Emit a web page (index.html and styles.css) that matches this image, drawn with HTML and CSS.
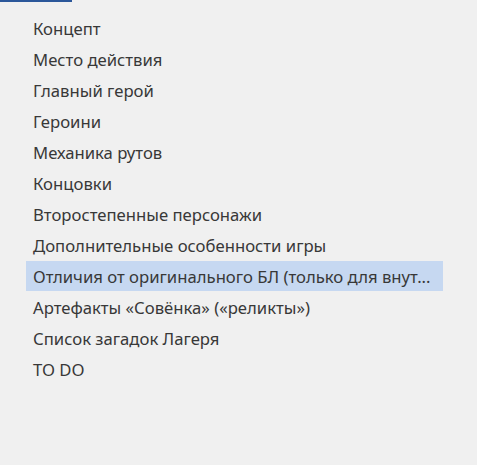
FILE: index.html
```html
<!DOCTYPE html>
<html lang="ru">
<head>
<meta charset="utf-8">
<link rel="stylesheet" href="styles.css">
</head>
<body>
<div class="topbar"></div>
<ul class="nav">
  <li class="item">Концепт</li>
  <li class="item">Место действия</li>
  <li class="item">Главный герой</li>
  <li class="item">Героини</li>
  <li class="item">Механика рутов</li>
  <li class="item">Концовки</li>
  <li class="item">Второстепенные персонажи</li>
  <li class="item">Дополнительные особенности игры</li>
  <li class="item selected">Отличия от оригинального БЛ (только для внут...</li>
  <li class="item">Артефакты «Совёнка» («реликты»)</li>
  <li class="item">Список загадок Лагеря</li>
  <li class="item">TO DO</li>
</ul>
</body>
</html>
```
FILE: styles.css
```css
html, body {
  margin: 0;
  padding: 0;
  background: #f0f0f0;
  width: 477px;
  height: 465px;
  overflow: hidden;
}
.topbar {
  width: 72px;
  height: 2px;
  background: #2b579a;
}
.nav {
  list-style: none;
  margin: 0;
  padding: 11px 0 0 26px;
  width: 417px;
}
.item {
  box-sizing: border-box;
  height: 31px;
  line-height: 30px;
  padding: 1px 0 0 7px;
  font-family: "Noto Sans", "Open Sans", sans-serif;
  font-size: 16.7px;
  color: #383838;
  white-space: nowrap;
}
.selected {
  background: #c6d8f1;
  height: 30px;
  margin-bottom: 1px;
  line-height: 29px;
}
```
